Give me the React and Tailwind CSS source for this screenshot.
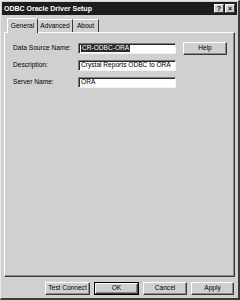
import React from "react";

const font = { fontFamily: '"Liberation Sans", Arial, sans-serif' };

function Btn({ children, w = "w-[44px]", def = false }) {
  return (
    <div className={`${w} h-[13px] ${def ? "border border-black" : ""} flex`}>
      <div className="flex-1 flex items-center justify-center bg-[#d0d0d0] border-t border-l border-t-white border-l-white border-r border-b border-r-[#3a3a3a] border-b-[#3a3a3a] shadow-[inset_-1px_-1px_0_#8a8a8a] text-[6.6px] text-black leading-none">
        {children}
      </div>
    </div>
  );
}

function Field({ label, children }) {
  return (
    <div className="flex items-center h-[11px]">
      <div className="w-[65px] text-[6.6px] leading-none text-black">{label}</div>
      <div className="w-[98px] h-[11px] bg-white border-t border-l border-t-[#7a7a7a] border-l-[#7a7a7a] border-b border-r border-b-[#f4f4f4] border-r-[#f4f4f4] shadow-[inset_1px_1px_0_#2a2a2a] flex items-center pl-[2px] text-[6.6px] leading-none text-black">
        {children}
      </div>
    </div>
  );
}

export default function App() {
  return (
    <div
      style={font}
      className="w-[240px] h-[300px] bg-[#d0d0d0] border-t border-l border-t-[#e8e8e8] border-l-[#e8e8e8] border-r-2 border-b-2 border-r-[#3a3a3a] border-b-[#3a3a3a] flex flex-col overflow-hidden"
    >
      <div className="h-[13px] mx-[1px] mt-[1px] bg-[#1d1d1d] flex items-center justify-between pl-[2px] pr-[2px]">
        <span className="text-white font-bold text-[7px] leading-none">ODBC Oracle Driver Setup</span>
        <div className="flex gap-[1px]">
          <div className="w-[10px] h-[9px] bg-[#d0d0d0] border-t border-l border-t-white border-l-white border-r border-b border-r-[#3a3a3a] border-b-[#3a3a3a] flex items-center justify-center text-[7px] font-bold leading-none text-black">?</div>
          <div className="w-[10px] h-[9px] bg-[#d0d0d0] border-t border-l border-t-white border-l-white border-r border-b border-r-[#3a3a3a] border-b-[#3a3a3a] flex items-center justify-center text-[7px] font-bold leading-none text-black">×</div>
        </div>
      </div>

      <div className="mt-[2px] ml-[6px] flex items-end h-[15px]">
        <div className="h-[15px] w-[31px] border-t border-l border-t-white border-l-white border-r border-r-[#3a3a3a] flex items-center justify-center text-[6.6px] leading-none text-black -mb-[1px] bg-[#d0d0d0] z-10 relative">
          General
        </div>
        <div className="h-[13px] w-[35px] border-t border-t-white border-r border-r-[#3a3a3a] flex items-center justify-center text-[6.6px] leading-none text-black">
          Advanced
        </div>
        <div className="h-[13px] w-[26px] border-t border-t-white border-r border-r-[#3a3a3a] flex items-center justify-center text-[6.6px] leading-none text-black">
          About
        </div>
      </div>

      <div className="mx-[3px] h-[245px] border-t border-l border-t-white border-l-white border-r border-b border-r-[#3a3a3a] border-b-[#3a3a3a] shadow-[inset_-1px_-1px_0_#8a8a8a] pt-[10px] pl-[8px] flex">
        <div className="flex flex-col gap-[6px]">
          <Field label="Data Source Name:">
            <span className="bg-[#2a2a2a] text-white px-[1px]">CR-ODBC-ORA</span>
          </Field>
          <Field label="Description:">Crystal Reports ODBC to ORA</Field>
          <Field label="Server Name:">ORA</Field>
        </div>
        <div className="ml-[7px] -mt-[1px]">
          <Btn>Help</Btn>
        </div>
      </div>

      <div className="flex justify-end gap-[4px] mt-[5px] mr-[4px]">
        <Btn w="w-[45px]">Test Connect</Btn>
        <Btn w="w-[45px]" def>OK</Btn>
        <Btn w="w-[44px]">Cancel</Btn>
        <Btn w="w-[43px]">Apply</Btn>
      </div>
    </div>
  );
}
